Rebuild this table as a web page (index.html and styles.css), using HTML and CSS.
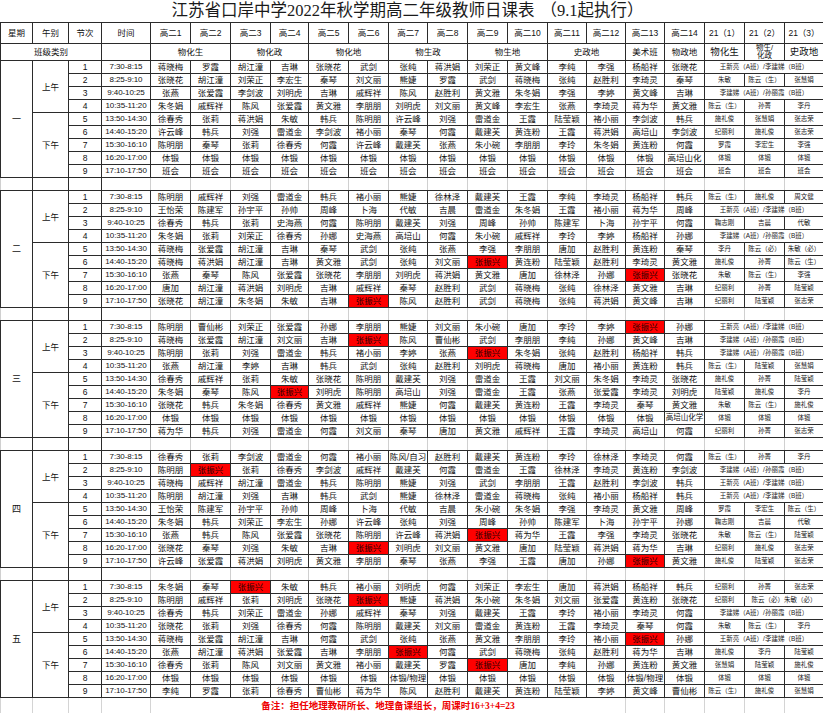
FILE: index.html
```html
<!DOCTYPE html>
<html lang="zh-CN">
<head>
<meta charset="utf-8">
<title>江苏省口岸中学2022年秋学期高二年级教师日课表</title>
<link rel="stylesheet" href="styles.css">
</head>
<body>
<div class="title">江苏省口岸中学2022年秋学期高二年级教师日课表<span class="exec">（9.1起执行）</span></div>
<table class="sheet">
<colgroup>
<col style="width:32px"><col style="width:36px"><col style="width:33px"><col style="width:49px">
<col style="width:40px"><col style="width:40px"><col style="width:40px"><col style="width:38px">
<col style="width:40px"><col style="width:40px"><col style="width:39px"><col style="width:40px">
<col style="width:40px"><col style="width:40px"><col style="width:39px"><col style="width:39px">
<col style="width:39px"><col style="width:40px"><col style="width:40px"><col style="width:40px"><col style="width:39px">
</colgroup>
<tr class="hd"><td>星期</td><td>午别</td><td>节次</td><td>时间</td><td>高二1</td><td>高二2</td><td>高二3</td><td>高二4</td><td>高二5</td><td>高二6</td><td>高二7</td><td>高二8</td><td>高二9</td><td>高二10</td><td>高二11</td><td>高二12</td><td>高二13</td><td>高二14</td><td>21（1）</td><td>21（2）</td><td>21（3）</td></tr>
<tr class="cat"><td colspan="3">班级类别</td><td></td><td colspan="2">物化生</td><td colspan="2">物化政</td><td colspan="2">物化地</td><td colspan="2">物生政</td><td colspan="2">物生地</td><td colspan="2">史政地</td><td>美术班</td><td>物政地</td><td class="c9">物化生</td><td><div class="clip">物生/<br>化政</div></td><td class="c9">史政地</td></tr>

<tr class="r"><td class="day" rowspan="9">一</td><td rowspan="4">上午</td><td>1</td><td class="t">7:30-8:15</td><td>蒋晓梅</td><td>罗霞</td><td>胡江潼</td><td>吉琳</td><td>张晓花</td><td>武剑</td><td>张纯</td><td>蒋洪娟</td><td>刘荣正</td><td>黄文峰</td><td>李纯</td><td>李强</td><td>杨船祥</td><td>张晓花</td><td class="s" colspan="3">王新亮（A班）/李建娣（B班）</td></tr>
<tr class="r"><td>2</td><td class="t">8:25-9:10</td><td>张晓花</td><td>胡江潼</td><td>刘荣正</td><td>李宏生</td><td>秦琴</td><td>刘文丽</td><td>熊婕</td><td>罗霞</td><td>武剑</td><td>蒋晓梅</td><td>张纯</td><td>赵胜利</td><td>李琦灵</td><td>秦琴</td><td class="s">朱敏</td><td class="s">陈云（生）</td><td class="s">张慧娟</td></tr>
<tr class="r"><td>3</td><td class="t">9:40-10:25</td><td>张燕</td><td>张爱霞</td><td>李剑波</td><td>刘明虎</td><td>吉琳</td><td>戚辉祥</td><td>陈风</td><td>赵胜利</td><td>黄文雅</td><td>朱冬娟</td><td>李强</td><td>李婷</td><td>黄文峰</td><td>吉琳</td><td class="s" colspan="3">李建娣（A班）/孙丽霞（B班）</td></tr>
<tr class="r"><td>4</td><td class="t">10:35-11:20</td><td>朱冬娟</td><td>戚辉祥</td><td>陈风</td><td>张爱霞</td><td>黄文雅</td><td>李朋朋</td><td>刘明虎</td><td>刘文丽</td><td>黄文峰</td><td>李宏生</td><td>张燕</td><td>李琦灵</td><td>蒋为华</td><td>黄文雅</td><td class="s">陈云（生）</td><td class="s">孙菁</td><td class="s">李丹</td></tr>
<tr class="r"><td rowspan="5">下午</td><td>5</td><td class="t">13:50-14:30</td><td>徐春秀</td><td>张莉</td><td>蒋洪娟</td><td>朱敏</td><td>韩兵</td><td>陈明朋</td><td>许云峰</td><td>刘强</td><td>雷道金</td><td>王霞</td><td>陆莹颖</td><td>褚小丽</td><td>李剑波</td><td>韩兵</td><td class="s">施礼俊</td><td class="s">张慧娟</td><td class="s">张志荣</td></tr>
<tr class="r"><td>6</td><td class="t">14:40-15:20</td><td>许云峰</td><td>韩兵</td><td>刘强</td><td>雷道金</td><td>李剑波</td><td>褚小丽</td><td>秦琴</td><td>何霞</td><td>戴建芙</td><td>黄连粉</td><td>王霞</td><td>蒋洪娟</td><td>高培山</td><td>李剑波</td><td class="s">纪丽利</td><td class="s">施礼俊</td><td class="s">张志荣</td></tr>
<tr class="r"><td>7</td><td class="t">15:30-16:10</td><td>陈明朋</td><td>秦琴</td><td>张莉</td><td>徐春秀</td><td>何霞</td><td>许云峰</td><td>戴建芙</td><td>张燕</td><td>朱小碗</td><td>李朋朋</td><td>李玲</td><td>朱冬娟</td><td>黄连粉</td><td>何霞</td><td class="s">罗霞</td><td class="s">李宏生</td><td class="s">李强</td></tr>
<tr class="r"><td>8</td><td class="t">16:20-17:00</td><td>体锻</td><td>体锻</td><td>体锻</td><td>体锻</td><td>体锻</td><td>体锻</td><td>体锻</td><td>体锻</td><td>体锻</td><td>体锻</td><td>体锻</td><td>体锻</td><td>体锻</td><td>高培山化</td><td class="s">体锻</td><td class="s">体锻</td><td class="s">体锻</td></tr>
<tr class="r"><td>9</td><td class="t">17:10-17:50</td><td>班会</td><td>班会</td><td>班会</td><td>班会</td><td>班会</td><td>班会</td><td>班会</td><td>班会</td><td>班会</td><td>班会</td><td>班会</td><td>班会</td><td>班会</td><td>班会</td><td class="s">班会</td><td class="s">班会</td><td class="s">班会</td></tr>
<tr class="sep"><td></td><td></td><td></td><td></td><td></td><td></td><td></td><td></td><td></td><td></td><td></td><td></td><td></td><td></td><td></td><td></td><td></td><td></td><td></td><td></td><td></td></tr>

<tr class="r"><td class="day" rowspan="9">二</td><td rowspan="4">上午</td><td>1</td><td class="t">7:30-8:15</td><td>陈明朋</td><td>戚辉祥</td><td>刘强</td><td>雷道金</td><td>韩兵</td><td>褚小丽</td><td>熊婕</td><td>徐林泽</td><td>戴建芙</td><td>王霞</td><td>李纯</td><td>李琦灵</td><td>杨船祥</td><td>韩兵</td><td class="s">陈云（生）</td><td class="s">施礼俊</td><td class="s">周文健</td></tr>
<tr class="r"><td>2</td><td class="t">8:25-9:10</td><td>王怡荣</td><td>陈建军</td><td>孙宇平</td><td>孙帅</td><td>周峰</td><td>卜海</td><td>代敏</td><td>吉晨</td><td>雷道金</td><td>朱冬娟</td><td>王霞</td><td>褚小丽</td><td>蒋为华</td><td>周峰</td><td class="s" colspan="3">王新亮（A班）/李建娣（B班）</td></tr>
<tr class="r"><td>3</td><td class="t">9:40-10:25</td><td>徐春秀</td><td>韩兵</td><td>张莉</td><td>史海燕</td><td>何霞</td><td>陈明朋</td><td>戴建芙</td><td>刘强</td><td>周峰</td><td>孙帅</td><td>陈建军</td><td>卜海</td><td>孙宇平</td><td>何霞</td><td class="s">鞠志刚</td><td class="s">吉晨</td><td class="s">代敏</td></tr>
<tr class="r"><td>4</td><td class="t">10:35-11:20</td><td>朱冬娟</td><td>张莉</td><td>刘荣正</td><td>徐春秀</td><td>孙娜</td><td>史海燕</td><td>高培山</td><td>何霞</td><td>朱小碗</td><td>戚辉祥</td><td>李玲</td><td>李婷</td><td>杨船祥</td><td>孙娜</td><td class="s" colspan="3">李建娣（A班）/孙丽霞（B班）</td></tr>
<tr class="r"><td rowspan="5">下午</td><td>5</td><td class="t">13:50-14:30</td><td>蒋晓梅</td><td>张爱霞</td><td>胡江潼</td><td>吉琳</td><td>秦琴</td><td>武剑</td><td>张纯</td><td>张燕</td><td>李强</td><td>李朋朋</td><td>唐加</td><td>赵胜利</td><td>黄连粉</td><td>秦琴</td><td class="s">李丹</td><td class="s">陈云（必）</td><td class="s">朱敏（必）</td></tr>
<tr class="r"><td>6</td><td class="t">14:40-15:20</td><td>蒋晓梅</td><td>蒋洪娟</td><td>胡江潼</td><td>吉琳</td><td>黄文雅</td><td>武剑</td><td>张纯</td><td>刘文丽</td><td class="hl">张振兴</td><td>黄连粉</td><td>陆莹颖</td><td>赵胜利</td><td>李琦灵</td><td>黄文雅</td><td class="s">施礼俊</td><td class="s">孙菁</td><td class="s">陈云（生）</td></tr>
<tr class="r"><td>7</td><td class="t">15:30-16:10</td><td>张燕</td><td>秦琴</td><td>陈风</td><td>张爱霞</td><td>张晓花</td><td>李朋朋</td><td>刘明虎</td><td>蒋洪娟</td><td>黄文雅</td><td>唐加</td><td>徐林泽</td><td>孙娜</td><td class="hl">张振兴</td><td>张晓花</td><td class="s">朱敏</td><td class="s">陈云（生）</td><td class="s">李强</td></tr>
<tr class="r"><td>8</td><td class="t">16:20-17:00</td><td>唐加</td><td>胡江潼</td><td>蒋洪娟</td><td>刘明虎</td><td>吉琳</td><td>戚辉祥</td><td>秦琴</td><td>赵胜利</td><td>武剑</td><td>蒋晓梅</td><td>张纯</td><td>徐林泽</td><td>黄文雅</td><td>吉琳</td><td class="s">纪丽利</td><td class="s">孙菁</td><td class="s">陆莹颖</td></tr>
<tr class="r"><td>9</td><td class="t">17:10-17:50</td><td>张晓花</td><td>胡江潼</td><td>朱冬娟</td><td>朱敏</td><td>吉琳</td><td class="hl">张振兴</td><td>陈风</td><td>赵胜利</td><td>武剑</td><td>蒋晓梅</td><td>张纯</td><td>蒋洪娟</td><td>黄文峰</td><td>吉琳</td><td class="s">纪丽利</td><td class="s">陆莹颖</td><td class="s">张志荣</td></tr>
<tr class="sep"><td></td><td></td><td></td><td></td><td></td><td></td><td></td><td></td><td></td><td></td><td></td><td></td><td></td><td></td><td></td><td></td><td></td><td></td><td></td><td></td><td></td></tr>

<tr class="r"><td class="day" rowspan="9">三</td><td rowspan="4">上午</td><td>1</td><td class="t">7:30-8:15</td><td>陈明朋</td><td>曹仙彬</td><td>刘荣正</td><td>张爱霞</td><td>孙娜</td><td>李朋朋</td><td>熊婕</td><td>刘文丽</td><td>朱小碗</td><td>唐加</td><td>李玲</td><td>李婷</td><td class="hl">张振兴</td><td>孙娜</td><td class="s" colspan="3">王新亮（A班）/李建娣（B班）</td></tr>
<tr class="r"><td>2</td><td class="t">8:25-9:10</td><td>蒋晓梅</td><td>张爱霞</td><td>胡江潼</td><td>刘文丽</td><td>吉琳</td><td class="hl">张振兴</td><td>陈风</td><td>曹仙彬</td><td>武剑</td><td>李朋朋</td><td>李纯</td><td>孙娜</td><td>黄文峰</td><td>吉琳</td><td class="s" colspan="3">李建娣（A班）/孙丽霞（B班）</td></tr>
<tr class="r"><td>3</td><td class="t">9:40-10:25</td><td>陈明朋</td><td>张莉</td><td>刘强</td><td>雷道金</td><td>韩兵</td><td>褚小丽</td><td>李婷</td><td>张燕</td><td class="hl">张振兴</td><td>朱冬娟</td><td>张纯</td><td>赵胜利</td><td>杨船祥</td><td>韩兵</td><td class="s" colspan="3">李建娣（A班）/孙丽霞（B班）</td></tr>
<tr class="r"><td>4</td><td class="t">10:35-11:20</td><td>张燕</td><td>胡江潼</td><td>李婷</td><td>吉琳</td><td>韩兵</td><td>武剑</td><td>张纯</td><td>赵胜利</td><td>刘明虎</td><td>蒋晓梅</td><td>唐加</td><td>褚小丽</td><td>黄连粉</td><td>韩兵</td><td class="s">陈云（生）</td><td class="s">陆莹颖</td><td class="s">张慧娟</td></tr>
<tr class="r"><td rowspan="5">下午</td><td>5</td><td class="t">13:50-14:30</td><td>徐春秀</td><td>戚辉祥</td><td>张莉</td><td>朱敏</td><td>张晓花</td><td>陈明朋</td><td>戴建芙</td><td>刘强</td><td>雷道金</td><td>王霞</td><td>刘文丽</td><td>朱冬娟</td><td>李琦灵</td><td>张晓花</td><td class="s">施礼俊</td><td class="s">孙菁</td><td class="s">陆莹颖</td></tr>
<tr class="r"><td>6</td><td class="t">14:40-15:20</td><td>朱冬娟</td><td>秦琴</td><td>陈风</td><td class="hl">张振兴</td><td>刘明虎</td><td>陈明朋</td><td>高培山</td><td>刘强</td><td>雷道金</td><td>王霞</td><td>张燕</td><td>张爱霞</td><td>李琦灵</td><td>刘明虎</td><td class="s">陆莹颖</td><td class="s">施礼俊</td><td class="s">李丹</td></tr>
<tr class="r"><td>7</td><td class="t">15:30-16:10</td><td>张晓花</td><td>韩兵</td><td>朱冬娟</td><td>徐春秀</td><td>黄文雅</td><td>戚辉祥</td><td>熊婕</td><td>何霞</td><td>戴建芙</td><td>黄连粉</td><td>王霞</td><td>李琦灵</td><td>秦琴</td><td>黄文雅</td><td class="s">朱敏</td><td class="s">陈云（生）</td><td class="s">施礼俊</td></tr>
<tr class="r"><td>8</td><td class="t">16:20-17:00</td><td>体锻</td><td>体锻</td><td>体锻</td><td>体锻</td><td>体锻</td><td>体锻</td><td>体锻</td><td>体锻</td><td>体锻</td><td>体锻</td><td>体锻</td><td>体锻</td><td>体锻</td><td class="fit">高培山化学</td><td class="s">体锻</td><td class="s">体锻</td><td class="s">体锻</td></tr>
<tr class="r"><td>9</td><td class="t">17:10-17:50</td><td>蒋为华</td><td>韩兵</td><td>刘强</td><td>雷道金</td><td>何霞</td><td>刘文丽</td><td>秦琴</td><td>唐加</td><td>黄文雅</td><td>戚辉祥</td><td>王霞</td><td>李琦灵</td><td>高培山</td><td>何霞</td><td class="s">纪丽利</td><td class="s">孙菁</td><td class="s">张志荣</td></tr>
<tr class="sep"><td></td><td></td><td></td><td></td><td></td><td></td><td></td><td></td><td></td><td></td><td></td><td></td><td></td><td></td><td></td><td></td><td></td><td></td><td></td><td></td><td></td></tr>

<tr class="r"><td class="day" rowspan="9">四</td><td rowspan="4">上午</td><td>1</td><td class="t">7:30-8:15</td><td>徐春秀</td><td>张莉</td><td>李剑波</td><td>雷道金</td><td>何霞</td><td>褚小丽</td><td>陈风/自习</td><td>赵胜利</td><td>戴建芙</td><td>黄连粉</td><td>李玲</td><td>徐林泽</td><td>李琦灵</td><td>何霞</td><td class="s">陈云（生）</td><td class="s">孙菁</td><td class="s">李丹</td></tr>
<tr class="r"><td>2</td><td class="t">8:25-9:10</td><td>陈明朋</td><td class="hl">张振兴</td><td>张莉</td><td>徐春秀</td><td>李剑波</td><td>戚辉祥</td><td>戴建芙</td><td>何霞</td><td>雷道金</td><td>王霞</td><td>徐林泽</td><td>李琦灵</td><td>黄连粉</td><td>李剑波</td><td class="s" colspan="3">李建娣（A班）/孙丽霞（B班）</td></tr>
<tr class="r"><td>3</td><td class="t">9:40-10:25</td><td>蒋晓梅</td><td>戚辉祥</td><td>胡江潼</td><td>雷道金</td><td>韩兵</td><td>陈明朋</td><td>熊婕</td><td>刘强</td><td>武剑</td><td>李朋朋</td><td>王霞</td><td>赵胜利</td><td>李剑波</td><td>韩兵</td><td class="s" colspan="3">王新亮（A班）/李建娣（B班）</td></tr>
<tr class="r"><td>4</td><td class="t">10:35-11:20</td><td>陈明朋</td><td>胡江潼</td><td>刘强</td><td>吉琳</td><td>韩兵</td><td>武剑</td><td>熊婕</td><td>徐林泽</td><td>雷道金</td><td>蒋晓梅</td><td>张纯</td><td>褚小丽</td><td>杨船祥</td><td>韩兵</td><td class="s" colspan="3">王新亮（A班）/李建娣（B班）</td></tr>
<tr class="r"><td rowspan="5">下午</td><td>5</td><td class="t">13:50-14:30</td><td>王怡荣</td><td>陈建军</td><td>孙宇平</td><td>孙帅</td><td>周峰</td><td>卜海</td><td>代敏</td><td>吉晨</td><td>朱小碗</td><td>朱冬娟</td><td>李强</td><td>李琦灵</td><td>黄文雅</td><td>周峰</td><td class="s">罗霞</td><td class="s">李宏生</td><td class="s">陈云（生）</td></tr>
<tr class="r"><td>6</td><td class="t">14:40-15:20</td><td>朱冬娟</td><td>韩兵</td><td>刘荣正</td><td>李宏生</td><td>孙娜</td><td>许云峰</td><td>张纯</td><td>刘强</td><td>周峰</td><td>孙帅</td><td>陈建军</td><td>卜海</td><td>孙宇平</td><td>孙娜</td><td class="s">鞠志刚</td><td class="s">吉晨</td><td class="s">代敏</td></tr>
<tr class="r"><td>7</td><td class="t">15:30-16:10</td><td>张燕</td><td>韩兵</td><td>陈风</td><td>张爱霞</td><td>张晓花</td><td>陈明朋</td><td>许云峰</td><td>蒋洪娟</td><td class="hl">张振兴</td><td>蒋为华</td><td>王霞</td><td>李强</td><td>李琦灵</td><td>张晓花</td><td class="s">朱敏</td><td class="s">陈云（生）</td><td class="s">陆莹颖</td></tr>
<tr class="r"><td>8</td><td class="t">16:20-17:00</td><td>张晓花</td><td>秦琴</td><td>刘强</td><td>朱敏</td><td>吉琳</td><td class="hl">张振兴</td><td>刘明虎</td><td>刘文丽</td><td>黄文雅</td><td>唐加</td><td>陆莹颖</td><td>蒋洪娟</td><td>蒋为华</td><td>吉琳</td><td class="s">纪丽利</td><td class="s">施礼俊</td><td class="s">张志荣</td></tr>
<tr class="r"><td>9</td><td class="t">17:10-17:50</td><td>许云峰</td><td>张爱霞</td><td>蒋洪娟</td><td>刘明虎</td><td>黄文雅</td><td>李朋朋</td><td>秦琴</td><td>张燕</td><td>李强</td><td>王霞</td><td>唐加</td><td>孙娜</td><td class="hl">张振兴</td><td>黄文雅</td><td class="s">施礼俊</td><td class="s">陆莹颖</td><td class="s">张志荣</td></tr>
<tr class="sep"><td></td><td></td><td></td><td></td><td></td><td></td><td></td><td></td><td></td><td></td><td></td><td></td><td></td><td></td><td></td><td></td><td></td><td></td><td></td><td></td><td></td></tr>

<tr class="r"><td class="day" rowspan="9">五</td><td rowspan="4">上午</td><td>1</td><td class="t">7:30-8:15</td><td>朱冬娟</td><td>秦琴</td><td class="hl">张振兴</td><td>朱敏</td><td>韩兵</td><td>褚小丽</td><td>刘明虎</td><td>何霞</td><td>刘荣正</td><td>李宏生</td><td>唐加</td><td>蒋洪娟</td><td>杨船祥</td><td>韩兵</td><td class="s">纪丽利</td><td class="s">孙菁</td><td class="s">张志荣</td></tr>
<tr class="r"><td>2</td><td class="t">8:25-9:10</td><td>陈明朋</td><td>戚辉祥</td><td>张莉</td><td>刘明虎</td><td>张晓花</td><td class="hl">张振兴</td><td>熊婕</td><td>蒋洪娟</td><td>朱小碗</td><td>朱冬娟</td><td>刘文丽</td><td>张爱霞</td><td>黄连粉</td><td>张晓花</td><td class="s">纪丽利</td><td class="s" colspan="2">陈云（必）朱敏（必）</td></tr>
<tr class="r"><td>3</td><td class="t">9:40-10:25</td><td>徐春秀</td><td>韩兵</td><td>刘荣正</td><td>雷道金</td><td>孙娜</td><td>戚辉祥</td><td>秦琴</td><td>刘强</td><td>戴建芙</td><td>王霞</td><td>李玲</td><td>褚小丽</td><td>李琦灵</td><td>何霞</td><td class="s" colspan="3">李建娣（A班）/孙丽霞（B班）</td></tr>
<tr class="r"><td>4</td><td class="t">10:35-11:20</td><td>张晓花</td><td>张莉</td><td>刘强</td><td>徐春秀</td><td>何霞</td><td>陈明朋</td><td>戴建芙</td><td>刘文丽</td><td>雷道金</td><td>黄连粉</td><td>王霞</td><td>李琦灵</td><td>秦琴</td><td>何霞</td><td class="s">朱敏</td><td class="s">陈云（生）</td><td class="s">李丹</td></tr>
<tr class="r"><td rowspan="5">下午</td><td>5</td><td class="t">13:50-14:30</td><td>蒋晓梅</td><td>张爱霞</td><td>胡江潼</td><td>吉琳</td><td>何霞</td><td>武剑</td><td>张纯</td><td>张燕</td><td>黄文雅</td><td>李朋朋</td><td>李玲</td><td>褚小丽</td><td class="hl">张振兴</td><td>孙娜</td><td class="s" colspan="3">王新亮（A班）/李建娣（B班）</td></tr>
<tr class="r"><td>6</td><td class="t">14:40-15:20</td><td>张燕</td><td>胡江潼</td><td>蒋洪娟</td><td>张爱霞</td><td>吉琳</td><td>李朋朋</td><td class="hl">张振兴</td><td>何霞</td><td>武剑</td><td>蒋晓梅</td><td>张纯</td><td>赵胜利</td><td>蒋为华</td><td>吉琳</td><td class="s">施礼俊</td><td class="s">李丹</td><td class="s">陆莹颖</td></tr>
<tr class="r"><td>7</td><td class="t">15:30-16:10</td><td>徐春秀</td><td>张莉</td><td>陈风</td><td>刘文丽</td><td>黄文雅</td><td>褚小丽</td><td>戴建芙</td><td>罗霞</td><td class="hl">张振兴</td><td>唐加</td><td>李纯</td><td>孙娜</td><td>黄连粉</td><td>黄文雅</td><td class="s">张慧娟</td><td class="s">陆莹颖</td><td class="s">施礼俊</td></tr>
<tr class="r"><td>8</td><td class="t">16:20-17:00</td><td>体锻</td><td>体锻</td><td>体锻</td><td>体锻</td><td>体锻</td><td>体锻</td><td>体锻/物理</td><td>体锻</td><td>体锻</td><td>体锻</td><td>体锻</td><td>体锻</td><td>体锻/物理</td><td>体锻</td><td class="s">体锻</td><td class="s">体锻</td><td class="s">体锻</td></tr>
<tr class="r"><td>9</td><td class="t">17:10-17:50</td><td>李纯</td><td>罗霞</td><td>张莉</td><td>徐春秀</td><td>曹仙彬</td><td>蒋为华</td><td>陈风</td><td>赵胜利</td><td>戴建芙</td><td>黄连粉</td><td>陆莹颖</td><td>李婷</td><td>黄文峰</td><td>曹仙彬</td><td class="s">陈云（生）</td><td class="s">施礼俊</td><td class="s">张慧娟</td></tr>
<tr class="foot"><td></td><td></td><td></td><td></td><td class="note" colspan="12">备注：担任地理教研所长、地理备课组长，周课时16+3+4=23</td><td></td><td></td><td></td><td></td><td></td></tr>
</table>
</body>
</html>
```

FILE: styles.css
```css
* {
  box-sizing: border-box;
}

html,
body {
  margin: 0;
  padding: 0;
  background: #ffffff;
}

body {
  width: 823px;
  overflow: hidden;
  color: #111111;
  font-family: "Liberation Sans", "Noto Sans CJK SC", sans-serif;
}

.title {
  height: 22px;
  line-height: 22px;
  padding-right: 8px;
  text-align: center;
  white-space: nowrap;
  font-family: "Liberation Serif", "Noto Sans CJK SC", serif;
  font-size: 16.5px;
  color: #1a1a1a;
}

.exec {
  margin-left: 6px;
}

.sheet {
  width: 823px;
  table-layout: fixed;
  border-collapse: collapse;
}

.sheet td {
  padding: 0;
  border: 1px solid #2b2b2b;
  text-align: center;
  vertical-align: middle;
  white-space: nowrap;
  overflow: hidden;
  font-size: 8.5px;
  line-height: 12px;
}

.hd {
  height: 21px;
}

.cat {
  height: 17px;
}

.cat .c9 {
  font-size: 9.5px;
}

.clip {
  height: 16px;
  display: flex;
  flex-direction: column;
  justify-content: center;
  font-size: 7.5px;
  line-height: 8px;
}

.r {
  height: 13px;
}

.sheet .t {
  font-size: 8px;
  letter-spacing: -0.1px;
}

.sheet .fit {
  font-size: 7.6px;
  letter-spacing: -0.1px;
}

.sheet .s {
  font-size: 6.5px;
  color: #222222;
}

.sheet .hl {
  background: #ff0000;
  color: #1a0000;
}

.sheet .day {
  font-size: 9px;
}

.sep {
  height: 13px;
}

.sheet .sep td {
  border-left-color: #d0d0d0;
  border-right-color: #d0d0d0;
  border-bottom-color: #2b2b2b;
}

.sheet .sep td:nth-child(-n+3) {
  border-right-color: #2b2b2b;
}

.foot {
  height: 16px;
}

.sheet .foot td {
  border-left-color: #d4d4d4;
  border-right-color: #d4d4d4;
  border-bottom-color: #ffffff;
}

.sheet .foot .note {
  font-family: "Liberation Serif", "Noto Sans CJK SC", serif;
  font-weight: bold;
  font-size: 9.5px;
  color: #ee0000;
  overflow: visible;
}
```
